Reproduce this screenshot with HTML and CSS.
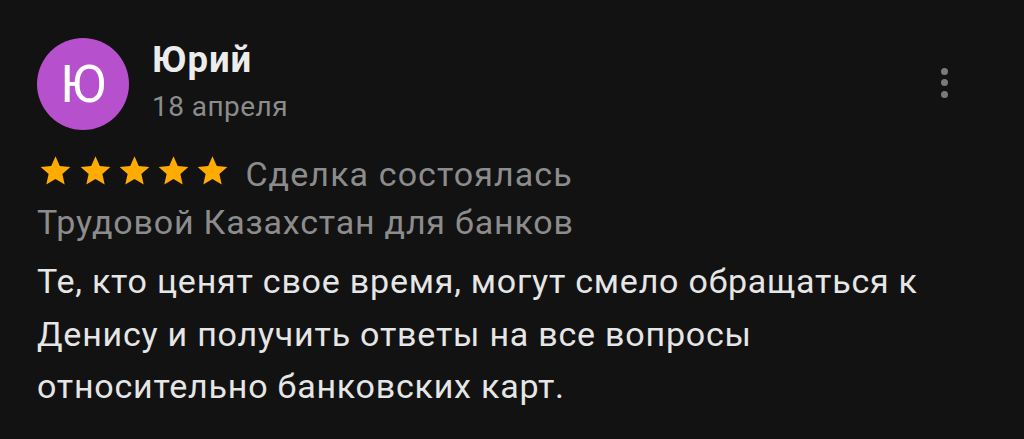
FILE: index.html
```html
<!DOCTYPE html>
<html lang="ru">
<head>
<meta charset="utf-8">
<link rel="stylesheet" href="styles.css">
</head>
<body>
<div class="review">
  <div class="header">
    <div class="avatar">Ю</div>
    <div class="meta">
      <div class="name">Юрий</div>
      <div class="date">18 апреля</div>
    </div>
    <div class="menu" aria-label="menu">
      <span class="dot"></span><span class="dot"></span><span class="dot"></span>
    </div>
  </div>
  <div class="rating">
    <div class="stars">
      <svg class="star" viewBox="0 0 24 24"><path d="M12 1.6l3.1 7.1 7.7.7-5.8 5.1 1.7 7.6L12 18.1l-6.7 4 1.7-7.6-5.8-5.1 7.7-.7z"/></svg>
      <svg class="star" viewBox="0 0 24 24"><path d="M12 1.6l3.1 7.1 7.7.7-5.8 5.1 1.7 7.6L12 18.1l-6.7 4 1.7-7.6-5.8-5.1 7.7-.7z"/></svg>
      <svg class="star" viewBox="0 0 24 24"><path d="M12 1.6l3.1 7.1 7.7.7-5.8 5.1 1.7 7.6L12 18.1l-6.7 4 1.7-7.6-5.8-5.1 7.7-.7z"/></svg>
      <svg class="star" viewBox="0 0 24 24"><path d="M12 1.6l3.1 7.1 7.7.7-5.8 5.1 1.7 7.6L12 18.1l-6.7 4 1.7-7.6-5.8-5.1 7.7-.7z"/></svg>
      <svg class="star" viewBox="0 0 24 24"><path d="M12 1.6l3.1 7.1 7.7.7-5.8 5.1 1.7 7.6L12 18.1l-6.7 4 1.7-7.6-5.8-5.1 7.7-.7z"/></svg>
    </div>
    <span class="status">Сделка состоялась</span>
  </div>
  <div class="service">Трудовой Казахстан для банков</div>
  <p class="text">Те, кто ценят свое время, могут смело обращаться к Денису и получить ответы на все вопросы относительно банковских карт.</p>
</div>
</body>
</html>
```
FILE: styles.css
```css
html, body {
  margin: 0;
  padding: 0;
  background: #121212;
  height: 100%;
}
body {
  font-family: Roboto, "Noto Sans", sans-serif;
  color: #e6e6e6;
}
.review {
  padding: 38px 0 0 37px;
  width: 948px;
  box-sizing: border-box;
}
.header {
  display: flex;
  align-items: flex-start;
}
.avatar {
  width: 92px;
  height: 92px;
  border-radius: 50%;
  background: #b650cc;
  color: #fff;
  font-size: 51px;
  display: flex;
  align-items: center;
  justify-content: center;
  flex: none;
}
.meta {
  margin-left: 23px;
  flex: 1;
}
.name {
  font-size: 36.5px;
  font-weight: 700;
  line-height: 44px;
  letter-spacing: 0.9px;
  color: #ececec;
}
.date {
  margin-top: 8px;
  font-size: 28px;
  line-height: 34px;
  letter-spacing: 0.45px;
  color: #8c8c8c;
}
.menu {
  display: flex;
  flex-direction: column;
  gap: 4.5px;
  margin-top: 29.5px;
}
.dot {
  width: 7px;
  height: 7px;
  border-radius: 50%;
  background: #7a7a7a;
}
.rating {
  display: flex;
  align-items: center;
  margin-top: 20.4px;
  height: 48px;
}
.stars {
  display: flex;
  gap: 6.25px;
  margin-left: 2.4px;
  margin-bottom: 8px;
}
.star {
  width: 33px;
  height: 33px;
  fill: #ffab00;
}
.status {
  margin-left: 16px;
  font-size: 34px;
  line-height: 48px;
  letter-spacing: 1.1px;
  color: #8c8c8c;
}
.service {
  font-size: 34px;
  line-height: 48px;
  letter-spacing: 0.8px;
  color: #8c8c8c;
}
.text {
  margin: 9px 0 0;
  font-size: 34px;
  line-height: 52.5px;
  letter-spacing: 0.78px;
  color: #e6e6e6;
}
```
